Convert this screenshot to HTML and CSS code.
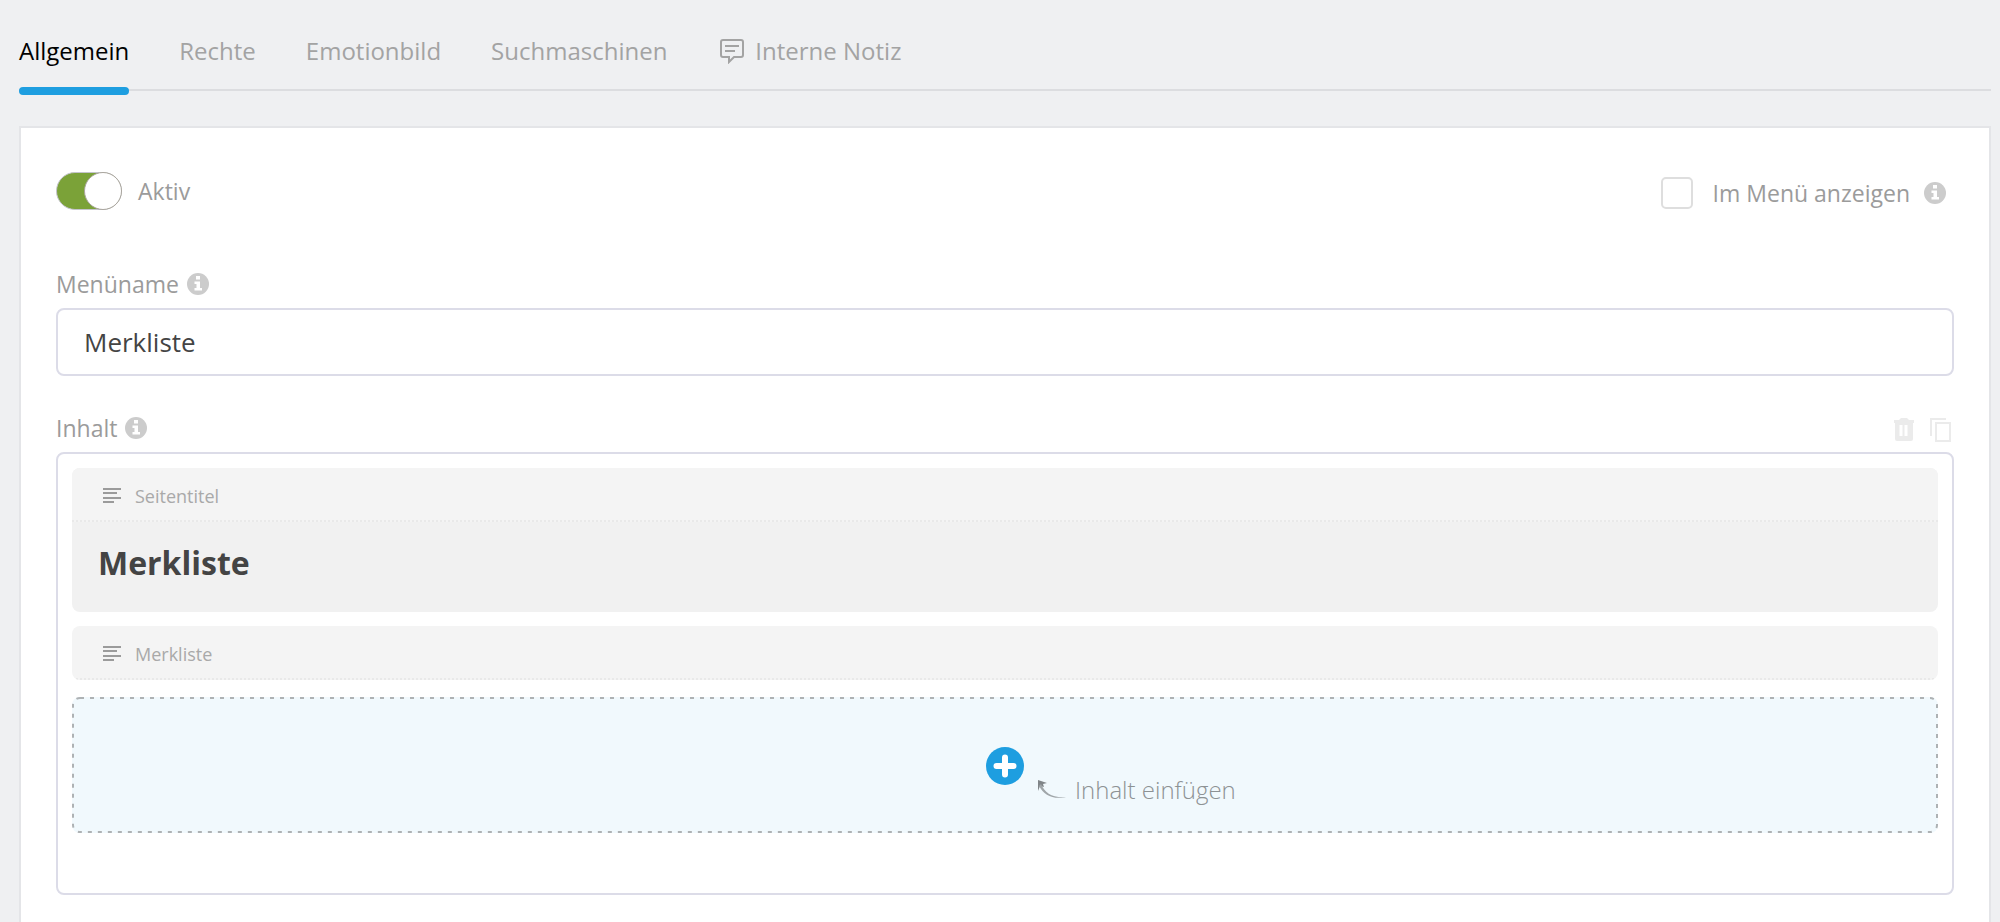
FILE: index.html
```html
<!DOCTYPE html>
<html lang="de">
    <head>
        <meta charset="utf-8">
        <title>Merkliste</title>
        <link rel="stylesheet" href="styles.css">
    </head>
    <body>
        <!-- shared icons -->
        <svg class="sprite" width="0" height="0">
            <symbol id="info" viewBox="0 0 22 22">
                <circle cx="11" cy="11" r="11" fill="#cccccc"/>
                <path d="M9 3h4v3.500H9zM7.500 8.500h5.500v6.500h2v2.500H7.500V15h2v-4h-2z" fill="#ffffff"/>
            </symbol>
            <symbol id="lines" viewBox="0 0 18 18">
                <path d="M0 2h18M0 6h14M0 11h18M0 15h11" stroke="#9b9b9b" stroke-width="2"/>
            </symbol>
        </svg>

        <nav class="tabs">
            <a href="#allgemein" class="tab active">Allgemein</a>
            <a href="#rechte" class="tab">Rechte</a>
            <a href="#emotionbild" class="tab">Emotionbild</a>
            <a href="#suchmaschinen" class="tab">Suchmaschinen</a>
            <a href="#notiz" class="tab">
                <svg class="note" width="26" height="26" viewBox="0 0 26 26" fill="none" stroke="#a3a3a3" stroke-width="2">
                    <path d="M4 2h18q2 0 2 2v13q0 2-2 2h-7l-5 5v-5H4q-2 0-2-2V4q0-2 2-2z"/>
                    <path d="M6 8h14M6 13h10"/>
                </svg>
                Interne Notiz
            </a>
        </nav>

        <main class="panel">
            <div class="options">
                <div class="option">
                    <input type="checkbox" class="toggle" id="aktiv" checked>
                    <label for="aktiv">Aktiv</label>
                </div>
                <div class="option right">
                    <input type="checkbox" class="check" id="menu">
                    <label for="menu">Im Menü anzeigen</label>
                    <svg class="info"><use href="#info"/></svg>
                </div>
            </div>

            <div class="row">
                <label for="name">Menüname</label>
                <svg class="info"><use href="#info"/></svg>
            </div>
            <input type="text" class="field" id="name" value="Merkliste">

            <div class="row second">
                <span>Inhalt</span>
                <svg class="info"><use href="#info"/></svg>
                <div class="tools">
                    <button type="button" class="tool" aria-label="Löschen">
                        <svg width="20" height="24" viewBox="0 0 20 24">
                            <path d="M0 2h5l2-2h6l2 2h5v3H0z" fill="#ebebeb"/>
                            <path d="M1 5h18v16q0 2-2 2H3q-2 0-2-2z" fill="#ebebeb"/>
                            <path d="M7 7v11M12 7v11" stroke="#ffffff" stroke-width="3"/>
                        </svg>
                    </button>
                    <button type="button" class="tool" aria-label="Kopieren">
                        <svg width="22" height="26" viewBox="0 0 22 26" fill="none" stroke="#ebebeb" stroke-width="2">
                            <path d="M1 19V2h15"/>
                            <path d="M6 6h14v18H6z"/>
                        </svg>
                    </button>
                </div>
            </div>
            <div class="content">
                <section class="block">
                    <div class="head"><svg class="lines"><use href="#lines"/></svg>Seitentitel</div>
                    <h1>Merkliste</h1>
                </section>
                <section class="block">
                    <div class="head"><svg class="lines"><use href="#lines"/></svg>Merkliste</div>
                </section>
                <div class="drop">
                    <svg class="outline"><rect class="dashes" x="1" y="1" rx="7"/></svg>
                    <button type="button" class="add" aria-label="Inhalt einfügen">
                        <svg width="38" height="38" viewBox="0 0 38 38">
                            <circle cx="19" cy="19" r="19" fill="#1e9ee0"/>
                            <path d="M19 10.500v17M10.500 19h17" stroke="#ffffff" stroke-width="6" stroke-linecap="round"/>
                        </svg>
                    </button>
                    <div class="hint">
                        <svg width="30" height="20" viewBox="0 0 30 20">
                            <path d="M1 0l9 3-4 1 1 3-4-1-2 5z" fill="#808588"/>
                            <path d="M4 4c4 9 11 14 25 13-13 3-22-2-27-11z" fill="#a0a6a9"/>
                        </svg>
                        <span>Inhalt einfügen</span>
                    </div>
                </div>
            </div>
        </main>
    </body>
</html>
```
FILE: styles.css
```css
*, *::before, *::after {
    box-sizing: border-box;
}
body {
    margin: 0;
    padding: 24px 9px 0 19px;
    min-height: 100vh;
    display: flex;
    flex-direction: column;
    background-color: #eff0f2;
    color: #9b9b9b;
    font-family: "Open Sans", sans-serif;
    font-size: 23px;
    line-height: 32px;
}
svg {
    display: block;
    flex: none;
}
button {
    padding: 0;
    border: none;
    background: none;
    cursor: pointer;
}
.sprite {
    position: absolute;
}
.tabs {
    display: flex;
    gap: 50px;
    height: 67px;
    border-bottom: 2px solid #dcdde0;
}
.tab {
    display: flex;
    height: 71px;
    gap: 10px;
    color: #a3a3a3;
    font-size: 24px;
    line-height: 54px;
    text-decoration: none;
}
.active {
    position: relative;
    color: #000000;
}
.active::after {
    content: "";
    position: absolute;
    left: 0;
    right: 0;
    bottom: 0;
    height: 8px;
    border-radius: 4px;
    background-color: #1e9ee0;
}
.note {
    margin: 14px 0 0 2px;
}
.panel {
    flex: 1;
    margin-top: 35px;
    padding: 44px 35px 28px;
    background-color: #ffffff;
    border: 2px solid #e4e5e8;
    border-bottom: none;
}
.options {
    display: flex;
    justify-content: space-between;
    align-items: flex-start;
    margin-bottom: 58px;
}
.option {
    display: flex;
    align-items: center;
    gap: 16px;
}
.right {
    gap: 20px;
    padding: 5px 8px 0 0;
}
.right .info {
    margin-left: -6px;
}
.toggle {
    appearance: none;
    width: 66px;
    height: 38px;
    margin: 0;
    border: 1px solid #c4c4cc;
    border-radius: 19px;
    background-color: #e4e5e8;
}
.toggle:checked {
    background-color: #7ba238;
}
.toggle::before {
    content: "";
    display: block;
    width: 38px;
    height: 38px;
    margin: -1px;
    border: 1px solid #aaa69e;
    border-radius: 50%;
    background-color: #ffffff;
}
.toggle:checked::before {
    margin-left: 27px;
}
.check {
    appearance: none;
    width: 32px;
    height: 32px;
    margin: 0;
    border: 2px solid #dedede;
    border-radius: 5px;
    background-color: #ffffff;
}
.info {
    width: 22px;
    height: 22px;
}
.row {
    display: flex;
    align-items: center;
    gap: 8px;
    height: 40px;
    padding-bottom: 8px;
}
.second {
    margin-top: 36px;
}
.tools {
    display: flex;
    align-items: center;
    gap: 16px;
    margin-left: auto;
    padding: 4px 2px 0 0;
}
.field {
    width: 100%;
    height: 68px;
    padding: 0 26px;
    border: 2px solid #dcdce8;
    border-radius: 8px;
    color: #444444;
    font-family: inherit;
    font-size: 26px;
}
.content {
    padding: 14px 14px 60px;
    border: 2px solid #dcdce8;
    border-radius: 8px;
}
.block {
    margin-bottom: 14px;
    border-radius: 8px;
    background-color: #f1f1f1;
    overflow: hidden;
}
.head {
    display: flex;
    align-items: center;
    gap: 14px;
    height: 54px;
    padding: 4px 31px 0;
    background-color: #f4f4f4;
    border-bottom: 2px dotted #e9e9e9;
    color: #a9a9a9;
    font-size: 18px;
}
.lines {
    width: 18px;
    height: 18px;
}
.block h1 {
    margin: 0;
    padding: 21px 26px 29px;
    color: #444444;
    font-size: 32px;
    line-height: 40px;
}
.drop {
    position: relative;
    display: grid;
    grid-template-columns: 1fr auto 1fr;
    align-items: center;
    height: 136px;
    padding-top: 2px;
    margin-top: 17px;
    border-radius: 8px;
    background-color: #f1f9fd;
}
.outline {
    position: absolute;
    top: 0;
    left: 0;
    width: 100%;
    height: 100%;
    pointer-events: none;
}
/* wider gaps than a dashed border gives */
.dashes {
    width: calc(100% - 2px);
    height: calc(100% - 2px);
    fill: none;
    stroke: #aeb2b4;
    stroke-width: 2px;
    stroke-dasharray: 4 6;
}
.add {
    grid-column: 2;
}
.hint {
    display: flex;
    align-items: center;
    gap: 8px;
    padding: 48px 0 0 13px;
    color: #8d9294;
    font-size: 24px;
    font-weight: 300;
}
```
